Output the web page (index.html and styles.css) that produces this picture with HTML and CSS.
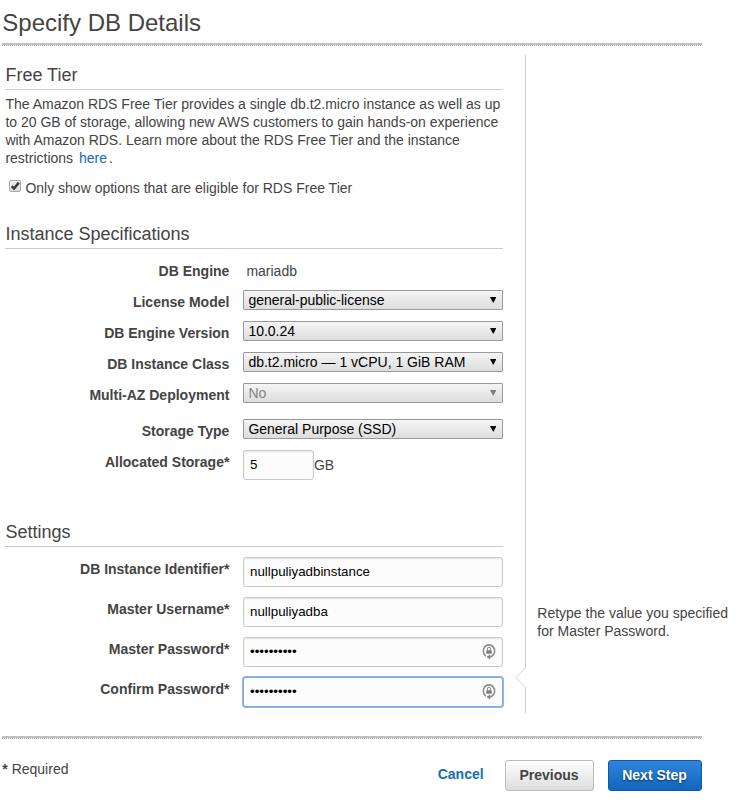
FILE: index.html
```html
<!DOCTYPE html>
<html lang="en">
<head>
<meta charset="utf-8">
<title>Specify DB Details</title>
<link rel="stylesheet" href="styles.css">
</head>
<body>
<div class="wizard">
  <h1 class="title">Specify DB Details</h1>
  <div class="rule"></div>
  <div class="content">
    <form class="main">
      <section class="tier">
        <h2 class="heading">Free Tier</h2>
        <p class="intro">The Amazon RDS Free Tier provides a single db.t2.micro instance as well as up to 20 GB of storage, allowing new AWS customers to gain hands-on experience with Amazon RDS. Learn more about the RDS Free Tier and the instance restrictions <a class="link" href="#">here</a>.</p>
        <label class="check">
          <span class="box"><svg width="12" height="12" viewBox="0 0 12 12"><path d="M2.8 6.2 5 8.6 9.8 2.6" fill="none" stroke="#3c3c3c" stroke-width="2.5"/></svg></span>
          Only show options that are eligible for RDS Free Tier
        </label>
      </section>
      <section class="specs">
        <h2 class="heading">Instance Specifications</h2>
        <div class="rows">
          <div class="row"><span class="label">DB Engine</span><span class="value">mariadb</span></div>
          <div class="row"><span class="label">License Model</span><div class="picker"><select class="select"><option>general-public-license</option></select></div></div>
          <div class="row"><span class="label">DB Engine Version</span><div class="picker"><select class="select"><option>10.0.24</option></select></div></div>
          <div class="row"><span class="label">DB Instance Class</span><div class="picker"><select class="select"><option>db.t2.micro — 1 vCPU, 1 GiB RAM</option></select></div></div>
          <div class="row row-loose"><span class="label">Multi-AZ Deployment</span><div class="picker picker-off"><select class="select" disabled><option>No</option></select></div></div>
          <div class="row"><span class="label">Storage Type</span><div class="picker"><select class="select"><option>General Purpose (SSD)</option></select></div></div>
          <div class="row"><span class="label">Allocated Storage*</span><div class="sized"><input class="input input-short" type="text" value="5"><span>GB</span></div></div>
        </div>
      </section>
      <section class="settings">
        <h2 class="heading">Settings</h2>
        <div class="rows rows-tall">
          <div class="row"><span class="label">DB Instance Identifier*</span><input class="input" type="text" value="nullpuliyadbinstance"></div>
          <div class="row"><span class="label">Master Username*</span><input class="input" type="text" value="nullpuliyadba"></div>
          <div class="row"><span class="label">Master Password*</span>
            <div class="secret"><input class="input" type="password" value="abcdefghij">
              <svg class="lock" width="14" height="17" viewBox="0 0 14 17"><path d="M4 13A5.7 6 0 1 1 10 13Q9 13.7 7 13.9" fill="none" stroke="#8c8c8c" stroke-width="1.6"/><path d="M8 11.5V16.5L4.6 14Z" fill="#858585"/><path d="M4.3 7.2h5.4v3.6H4.3z" fill="#808080"/><path d="M5.4 7.4V6a1.6 1.6 0 0 1 3.2 0V7.4" fill="none" stroke="#858585"/></svg>
            </div></div>
          <div class="row"><span class="label">Confirm Password*</span>
            <div class="secret"><input class="input input-active" type="password" value="abcdefghij">
              <svg class="lock" width="14" height="17" viewBox="0 0 14 17"><path d="M4 13A5.7 6 0 1 1 10 13Q9 13.7 7 13.9" fill="none" stroke="#8c8c8c" stroke-width="1.6"/><path d="M8 11.5V16.5L4.6 14Z" fill="#858585"/><path d="M4.3 7.2h5.4v3.6H4.3z" fill="#808080"/><path d="M5.4 7.4V6a1.6 1.6 0 0 1 3.2 0V7.4" fill="none" stroke="#858585"/></svg>
            </div></div>
        </div>
      </section>
    </form>
    <aside class="help">
      <svg class="pointer" width="11" height="21" viewBox="0 0 11 21"><path d="M11 0.5 0.8 10.5 11 20.5" fill="#fff" stroke="#d4d4d4"/></svg>
      <p class="hint">Retype the value you specified for Master Password.</p>
    </aside>
  </div>
  <div class="rule"></div>
  <footer class="footer">
    <span class="required"><b>*</b> Required</span>
    <a class="cancel" href="#">Cancel</a>
    <button class="button button-plain" type="button">Previous</button>
    <button class="button button-primary" type="button">Next Step</button>
  </footer>
</div>
</body>
</html>
```

FILE: styles.css
```css
* { box-sizing: border-box; }
body {
  margin: 0;
  background: #fff;
  color: #444;
  font: 14px/18px "Liberation Sans", Arial, sans-serif;
}
h1, h2, p { margin: 0; font-weight: normal; }
.wizard { padding: 9px 0 0 2px; width: 747px; }
.title { font-size: 24px; line-height: 28px; height: 34px; padding-left: 0.3px; }
.rule {
  width: 700px;
  height: 3px;
  border-top: 2px solid #c0c0c0;
  background: repeating-linear-gradient(90deg, #aaa 0 1px, #fff 1px 2px);
}
.content { display: flex; height: 690px; padding-top: 9px; }
.main { width: 523px; padding: 10px 22px 0 3px; }
.heading {
  height: 25px;
  padding-left: 0.4px;
  font-size: 18px;
  line-height: 20px;
  border-bottom: 1px solid #ccc;
}
.tier { height: 159px; }
.specs { height: 298px; }
.intro { padding: 5px 0 0 0.4px; }
.link { color: #146eb4; text-decoration: none; margin: 0 2px; }
.check { display: flex; margin-top: 12px; padding-left: 4px; gap: 4.4px; }
.box {
  width: 12px;
  height: 12px;
  margin-top: 1px;
  border: 1px solid #aaa;
  border-radius: 2px;
  background: linear-gradient(#eee, #dcdcdc);
}
.box svg { display: block; margin: -1px; }
.rows { padding-top: 10px; }
.row { display: grid; grid-template-columns: 224.4px 260px; column-gap: 13.6px; height: 31px; }
.row-loose { height: 36px; }
.rows-tall .row { height: 40px; }
.label { padding-top: 3px; font-weight: bold; text-align: right; }
.value { padding: 3px 0 0 3.4px; }
.picker { position: relative; height: 20px; }
.picker::after {
  content: "";
  position: absolute;
  right: 6.5px;
  top: 7px;
  width: 6.5px;
  height: 6px;
  background: #000;
  clip-path: polygon(0 0, 100% 0, 50% 100%);
}
.picker-off::after { background: #808080; }
.select {
  appearance: none;
  display: block;
  width: 260px;
  height: 20px;
  margin: 0;
  padding: 0 20px 0 4.4px;
  border: 1px solid #999;
  border-radius: 1px;
  background: linear-gradient(#f5f5f5, #ddd);
  color: #000;
  font: 14px/18px "Liberation Sans", Arial, sans-serif;
  opacity: 1;
}
.select:disabled { color: #858585; }
.input {
  display: block;
  width: 260px;
  height: 30px;
  margin: 0;
  padding: 0 6px 2px;
  border: 1px solid #c8c8c8;
  border-radius: 3px;
  background: #fcfcfc;
  box-shadow: inset 0 1px 2px rgba(0, 0, 0, 0.1);
  color: #000;
  font: 13.333px "Liberation Sans", Arial, sans-serif;
  outline: none;
}
.input-short { width: 71px; }
.input-active { border-color: #84aaea; box-shadow: 0 0 0 1px #90b3f0; }
.sized { display: flex; align-items: center; height: 30px; }
.secret { position: relative; height: 30px; }
.lock { position: absolute; right: 7px; top: 6px; }
.help {
  position: relative;
  width: 220px;
  height: 658px;
  border-left: 1px solid #ccc;
  padding: 549px 0 0 11.3px;
}
.pointer { position: absolute; left: -11px; top: 612px; }
.hint { width: 200px; }
.footer { display: flex; align-items: flex-start; width: 700px; padding-top: 21px; }
.required { flex: 1; padding-left: 0.3px; }
.cancel { margin: 5px 21.4px 0 0; color: #146eb4; font-weight: bold; text-decoration: none; }
.button {
  height: 31px;
  padding: 0 1px 2px 0;
  border-radius: 3px;
  font: bold 14px/18px "Liberation Sans", Arial, sans-serif;
}
.button-plain {
  width: 89px;
  border: 1px solid #bbb;
  background: linear-gradient(#fff, #ddd);
  color: #444;
}
.button-primary {
  width: 94px;
  margin-left: 14px;
  border: 1px solid #1358a8;
  background: linear-gradient(#2f86dc, #1166bb);
  color: #fff;
  text-shadow: 0 1px 2px rgba(0, 0, 0, 0.6);
}
```
